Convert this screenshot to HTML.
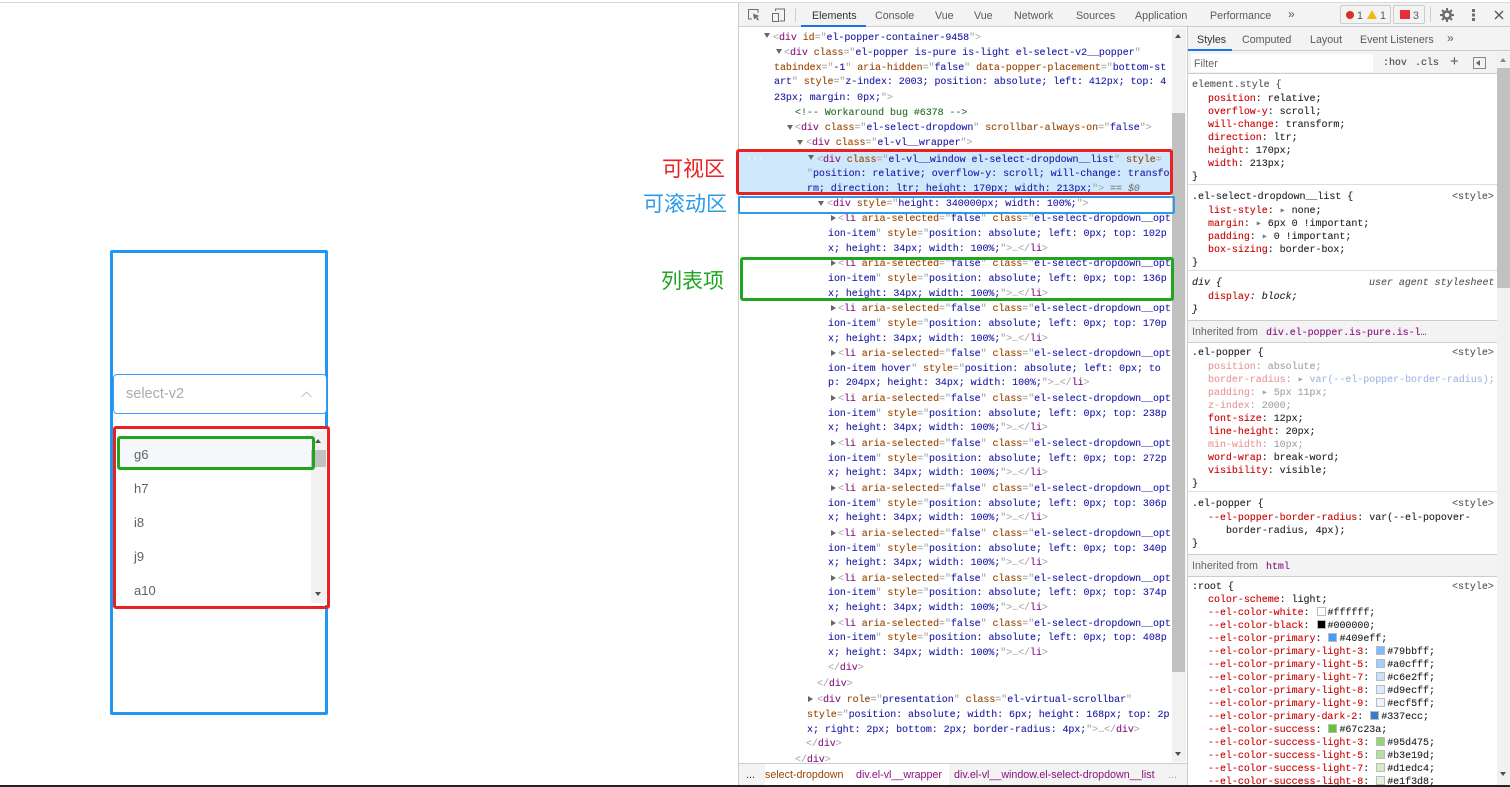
<!DOCTYPE html>
<html><head><meta charset="utf-8"><style>
html,body{margin:0;padding:0;background:#fff;width:1510px;height:787px;overflow:hidden}
#r{position:relative;width:1510px;height:787px;overflow:hidden;font-family:"Liberation Sans",sans-serif}
.a{position:absolute;box-sizing:border-box}
.l{position:absolute;white-space:pre;font:10px/14px "Liberation Mono","DejaVu Sans Mono",monospace;letter-spacing:-.06px;color:#a8a8a8;-webkit-text-stroke:.1px;margin-top:2px}
.l i{font-style:normal;color:#881280}.l b{font-weight:normal;color:#994500}.l u{text-decoration:none;color:#1a1aa6}
.s{color:#222;letter-spacing:-.03px;margin-top:2px}.s em{font-style:normal;color:#c80000}
.f{opacity:.42}
.tri{position:absolute;width:0;height:0;border-left:3.5px solid transparent;border-right:3.5px solid transparent;border-top:5px solid #666}
.trr{position:absolute;width:0;height:0;border-top:3.5px solid transparent;border-bottom:3.5px solid transparent;border-left:5px solid #666}
.tab{position:absolute;font:10.7px/14px "Liberation Sans",sans-serif;color:#5a5a5a;white-space:pre;margin-top:1px}
.opt{position:absolute;left:134px;font-size:13px;line-height:16px;color:#606266}
.cn{position:absolute;font:21px/26px "Noto Sans CJK SC",sans-serif;white-space:pre}
.sw{display:inline-block;width:9px;height:9px;border:1px solid #bbb;box-sizing:border-box;vertical-align:-1px;margin:0 2px 0 1px}
</style></head><body><div id="r">

<div class="a" style="left:0;top:2px;width:1510px;height:1px;background:#d9d9d9"></div>
<div class="a" style="left:0;top:785px;width:1510px;height:2px;background:#222"></div>

<!-- left demo -->
<div class="a" style="left:110px;top:250px;width:218px;height:465px;border:3px solid #2196f3;border-radius:2px"></div>
<div class="a" style="left:113px;top:374px;width:214px;height:40px;border:1px solid #409eff;border-radius:4px;background:#fff"></div>
<div class="a" style="left:126px;top:385px;font-size:14.5px;line-height:18px;color:#a8abb2">select-v2</div>
<svg class="a" style="left:300px;top:390px" width="13" height="9" viewBox="0 0 13 9"><path d="M1.5 7L6.5 2l5 5" fill="none" stroke="#c4c6cb" stroke-width="1"/></svg>

<div class="a" style="left:116px;top:429px;width:211px;height:176px;background:#fff"></div>
<div class="a" style="left:118px;top:438px;width:196px;height:31px;background:#f5f7fa"></div>
<div class="opt" style="top:447px">g6</div>
<div class="opt" style="top:481px">h7</div>
<div class="opt" style="top:515px">i8</div>
<div class="opt" style="top:549px">j9</div>
<div class="opt" style="top:583px">a10</div>
<div class="a" style="left:311px;top:431px;width:15px;height:172px;background:#f1f1f1"></div>
<div class="a" style="left:311px;top:450px;width:15px;height:17px;background:#c1c1c1"></div>
<div class="a" style="left:315px;top:439px;width:0;height:0;border-left:3.5px solid transparent;border-right:3.5px solid transparent;border-bottom:4px solid #505050"></div>
<div class="a" style="left:315px;top:592px;width:0;height:0;border-left:3.5px solid transparent;border-right:3.5px solid transparent;border-top:4px solid #505050"></div>
<div class="a" style="left:113px;top:426px;width:217px;height:183px;border:3px solid #e82222;border-radius:3px"></div>
<div class="a" style="left:117px;top:436px;width:198px;height:34px;border:3px solid #1fa51f;border-radius:3px"></div>

<!-- annotations -->
<div class="cn" style="left:662px;top:155px;color:#e82222">可视区</div>
<div class="cn" style="left:643px;top:190px;color:#2d9be8">可滚动区</div>
<div class="cn" style="left:661px;top:267px;color:#1fa51f">列表项</div>

<!-- devtools frame -->
<div class="a" style="left:738px;top:3px;width:772px;height:782px;background:#fff;border-left:1px solid #ccc"></div>
<div class="a" style="left:739px;top:3px;width:771px;height:24px;background:#f3f3f3;border-bottom:1px solid #ccc"></div>
<svg class="a" style="left:747px;top:8px" width="14" height="14" viewBox="0 0 14 14"><path d="M5 11H1.5V1.5H11V5" fill="none" stroke="#6e6e6e" stroke-width="1"/><path d="M6 5.5l6.5 2.5-2.5 1 2 2.5-1.2 1-2-2.5L7 11.5z" fill="#6e6e6e"/></svg>
<svg class="a" style="left:771px;top:8px" width="15" height="14" viewBox="0 0 15 14"><path d="M4.5 3V1h9v12h-5" fill="none" stroke="#6e6e6e"/><rect x="1.5" y="5.5" width="6" height="8" fill="none" stroke="#6e6e6e"/></svg>
<div class="a" style="left:795px;top:8px;width:1px;height:14px;background:#ccc"></div>
<div class="a" style="left:801px;top:25px;width:65px;height:2px;background:#1a73e8"></div>
<div class="tab" style="left:812px;top:8px;color:#333">Elements</div>
<div class="tab" style="left:875px;top:8px">Console</div>
<div class="tab" style="left:935px;top:8px">Vue</div>
<div class="tab" style="left:974px;top:8px">Vue</div>
<div class="tab" style="left:1014px;top:8px">Network</div>
<div class="tab" style="left:1076px;top:8px">Sources</div>
<div class="tab" style="left:1135px;top:8px">Application</div>
<div class="tab" style="left:1210px;top:8px">Performance</div>
<div class="tab" style="left:1288px;top:6px;font-size:12px">»</div>
<div class="a" style="left:1340px;top:5px;width:51px;height:19px;border:1px solid #ccc;border-radius:2px"></div>
<div class="a" style="left:1393px;top:5px;width:32px;height:19px;border:1px solid #ccc;border-radius:2px"></div>
<div class="a" style="left:1346px;top:11px;width:8px;height:8px;border-radius:50%;background:#d93025"></div>
<div class="tab" style="left:1357px;top:8px">1</div>
<svg class="a" style="left:1367px;top:10px" width="10" height="9" viewBox="0 0 10 9"><path d="M5 0l5 9H0z" fill="#f2b90f"/></svg>
<div class="tab" style="left:1380px;top:8px">1</div>
<div class="a" style="left:1400px;top:10px;width:10px;height:9px;background:#e5303a"></div>
<div class="tab" style="left:1413px;top:8px">3</div>
<div class="a" style="left:1430px;top:7px;width:1px;height:15px;background:#ccc"></div>
<svg class="a" style="left:1440px;top:8px" width="14" height="14" viewBox="0 0 14 14"><circle cx="7" cy="7" r="3.6" fill="none" stroke="#6e6e6e" stroke-width="2.6"/><path d="M7 0v3M7 11v3M0 7h3M11 7h3M2 2l2 2M10 10l2 2M12 2l-2 2M4 10l-2 2" stroke="#6e6e6e" stroke-width="2"/></svg>
<div class="a" style="left:1472px;top:9px;width:3px;height:3px;background:#6e6e6e;box-shadow:0 4.5px 0 #6e6e6e,0 9px 0 #6e6e6e"></div>
<svg class="a" style="left:1494px;top:10px" width="10" height="10" viewBox="0 0 10 10"><path d="M1 1l8 8M9 1L1 9" stroke="#555" stroke-width="1.3"/></svg>

<!-- elements pane -->
<div class="a" style="left:739px;top:151px;width:433px;height:43px;background:#cfe8fc"></div>
<div class="a" style="left:1172px;top:28px;width:14px;height:734px;background:#f1f1f1"></div>
<div class="a" style="left:1172px;top:113px;width:13px;height:559px;background:#c1c1c1"></div>
<div class="a" style="left:1175px;top:34px;border-left:3.5px solid transparent;border-right:3.5px solid transparent;border-bottom:4px solid #505050"></div>
<div class="a" style="left:1175px;top:752px;border-left:3.5px solid transparent;border-right:3.5px solid transparent;border-top:4px solid #505050"></div>
<div class="a" style="left:1187px;top:27px;width:1px;height:758px;background:#ccc"></div>

<div class="tri" style="left:764px;top:33px"></div>
<div class="l" style="left:773px;top:30px">&lt;<i>div</i> <b>id</b>="<u>el-popper-container-9458</u>"&gt;</div>
<div class="tri" style="left:776px;top:49px"></div>
<div class="l" style="left:784px;top:45px">&lt;<i>div</i> <b>class</b>="<u>el-popper is-pure is-light el-select-v2__popper</u>"</div>
<div class="l" style="left:774px;top:60px"><b>tabindex</b>="<u>-1</u>" <b>aria-hidden</b>="<u>false</u>" <b>data-popper-placement</b>="<u>bottom-st</u></div>
<div class="l" style="left:774px;top:74px"><u>art</u>" <b>style</b>="<u>z-index: 2003; position: absolute; left: 412px; top: 4</u></div>
<div class="l" style="left:774px;top:90px"><u>23px; margin: 0px;</u>"&gt;</div>
<div class="l" style="left:795px;top:105px;color:#236e25">&lt;!-- Workaround bug #6378 --&gt;</div>
<div class="tri" style="left:787px;top:125px"></div>
<div class="l" style="left:795px;top:120px">&lt;<i>div</i> <b>class</b>="<u>el-select-dropdown</u>" <b>scrollbar-always-on</b>="<u>false</u>"&gt;</div>
<div class="tri" style="left:797px;top:140px"></div>
<div class="l" style="left:806px;top:135px">&lt;<i>div</i> <b>class</b>="<u>el-vl__wrapper</u>"&gt;</div>
<div class="tri" style="left:808px;top:155px"></div>
<div class="l" style="left:817px;top:152px">&lt;<i>div</i> <b>class</b>="<u>el-vl__window el-select-dropdown__list</u>" <b>style</b>=</div>
<div class="l" style="left:807px;top:166px">"<u>position: relative; overflow-y: scroll; will-change: transfo</u></div>
<div class="l" style="left:807px;top:181px"><u>rm; direction: ltr; height: 170px; width: 213px;</u>"&gt; <span style="color:#777">== <span style="font-style:italic">$0</span></span></div>
<div class="l" style="left:746px;top:149px;color:#fff">...</div>
<div class="tri" style="left:818px;top:201px"></div>
<div class="l" style="left:827px;top:196px">&lt;<i>div</i> <b>style</b>="<u>height: 340000px; width: 100%;</u>"&gt;</div>

<div class="trr" style="left:831px;top:215px"></div>
<div class="l" style="left:838px;top:211px">&lt;<i>li</i> <b>aria-selected</b>="<u>false</u>" <b>class</b>="<u>el-select-dropdown__opt</u></div>
<div class="l" style="left:828px;top:226px"><u>ion-item</u>" <b>style</b>="<u>position: absolute; left: 0px; top: 102p</u></div>
<div class="l" style="left:828px;top:241px"><u>x; height: 34px; width: 100%;</u>"&gt;…&lt;/<i>li</i>&gt;</div>
<div class="trr" style="left:831px;top:260px"></div>
<div class="l" style="left:838px;top:256px">&lt;<i>li</i> <b>aria-selected</b>="<u>false</u>" <b>class</b>="<u>el-select-dropdown__opt</u></div>
<div class="l" style="left:828px;top:271px"><u>ion-item</u>" <b>style</b>="<u>position: absolute; left: 0px; top: 136p</u></div>
<div class="l" style="left:828px;top:286px"><u>x; height: 34px; width: 100%;</u>"&gt;…&lt;/<i>li</i>&gt;</div>
<div class="trr" style="left:831px;top:305px"></div>
<div class="l" style="left:838px;top:301px">&lt;<i>li</i> <b>aria-selected</b>="<u>false</u>" <b>class</b>="<u>el-select-dropdown__opt</u></div>
<div class="l" style="left:828px;top:316px"><u>ion-item</u>" <b>style</b>="<u>position: absolute; left: 0px; top: 170p</u></div>
<div class="l" style="left:828px;top:331px"><u>x; height: 34px; width: 100%;</u>"&gt;…&lt;/<i>li</i>&gt;</div>
<div class="trr" style="left:831px;top:350px"></div>
<div class="l" style="left:838px;top:346px">&lt;<i>li</i> <b>aria-selected</b>="<u>false</u>" <b>class</b>="<u>el-select-dropdown__opt</u></div>
<div class="l" style="left:828px;top:361px"><u>ion-item hover</u>" <b>style</b>="<u>position: absolute; left: 0px; to</u></div>
<div class="l" style="left:828px;top:375px"><u>p: 204px; height: 34px; width: 100%;</u>"&gt;…&lt;/<i>li</i>&gt;</div>
<div class="trr" style="left:831px;top:395px"></div>
<div class="l" style="left:838px;top:391px">&lt;<i>li</i> <b>aria-selected</b>="<u>false</u>" <b>class</b>="<u>el-select-dropdown__opt</u></div>
<div class="l" style="left:828px;top:406px"><u>ion-item</u>" <b>style</b>="<u>position: absolute; left: 0px; top: 238p</u></div>
<div class="l" style="left:828px;top:420px"><u>x; height: 34px; width: 100%;</u>"&gt;…&lt;/<i>li</i>&gt;</div>
<div class="trr" style="left:831px;top:440px"></div>
<div class="l" style="left:838px;top:436px">&lt;<i>li</i> <b>aria-selected</b>="<u>false</u>" <b>class</b>="<u>el-select-dropdown__opt</u></div>
<div class="l" style="left:828px;top:451px"><u>ion-item</u>" <b>style</b>="<u>position: absolute; left: 0px; top: 272p</u></div>
<div class="l" style="left:828px;top:465px"><u>x; height: 34px; width: 100%;</u>"&gt;…&lt;/<i>li</i>&gt;</div>
<div class="trr" style="left:831px;top:485px"></div>
<div class="l" style="left:838px;top:481px">&lt;<i>li</i> <b>aria-selected</b>="<u>false</u>" <b>class</b>="<u>el-select-dropdown__opt</u></div>
<div class="l" style="left:828px;top:496px"><u>ion-item</u>" <b>style</b>="<u>position: absolute; left: 0px; top: 306p</u></div>
<div class="l" style="left:828px;top:510px"><u>x; height: 34px; width: 100%;</u>"&gt;…&lt;/<i>li</i>&gt;</div>
<div class="trr" style="left:831px;top:530px"></div>
<div class="l" style="left:838px;top:526px">&lt;<i>li</i> <b>aria-selected</b>="<u>false</u>" <b>class</b>="<u>el-select-dropdown__opt</u></div>
<div class="l" style="left:828px;top:541px"><u>ion-item</u>" <b>style</b>="<u>position: absolute; left: 0px; top: 340p</u></div>
<div class="l" style="left:828px;top:555px"><u>x; height: 34px; width: 100%;</u>"&gt;…&lt;/<i>li</i>&gt;</div>
<div class="trr" style="left:831px;top:575px"></div>
<div class="l" style="left:838px;top:571px">&lt;<i>li</i> <b>aria-selected</b>="<u>false</u>" <b>class</b>="<u>el-select-dropdown__opt</u></div>
<div class="l" style="left:828px;top:585px"><u>ion-item</u>" <b>style</b>="<u>position: absolute; left: 0px; top: 374p</u></div>
<div class="l" style="left:828px;top:600px"><u>x; height: 34px; width: 100%;</u>"&gt;…&lt;/<i>li</i>&gt;</div>
<div class="trr" style="left:831px;top:620px"></div>
<div class="l" style="left:838px;top:616px">&lt;<i>li</i> <b>aria-selected</b>="<u>false</u>" <b>class</b>="<u>el-select-dropdown__opt</u></div>
<div class="l" style="left:828px;top:630px"><u>ion-item</u>" <b>style</b>="<u>position: absolute; left: 0px; top: 408p</u></div>
<div class="l" style="left:828px;top:645px"><u>x; height: 34px; width: 100%;</u>"&gt;…&lt;/<i>li</i>&gt;</div>
<div class="l" style="left:828px;top:660px">&lt;/<i>div</i>&gt;</div>
<div class="l" style="left:817px;top:676px">&lt;/<i>div</i>&gt;</div>
<div class="trr" style="left:808px;top:696px"></div>
<div class="l" style="left:817px;top:692px">&lt;<i>div</i> <b>role</b>="<u>presentation</u>" <b>class</b>="<u>el-virtual-scrollbar</u>"</div>
<div class="l" style="left:807px;top:707px"><b>style</b>="<u>position: absolute; width: 6px; height: 168px; top: 2p</u></div>
<div class="l" style="left:807px;top:722px"><u>x; right: 2px; bottom: 2px; border-radius: 4px;</u>"&gt;…&lt;/<i>div</i>&gt;</div>
<div class="l" style="left:806px;top:736px">&lt;/<i>div</i>&gt;</div>
<div class="l" style="left:795px;top:752px">&lt;/<i>div</i>&gt;</div>

<!-- breadcrumb -->
<div class="a" style="left:739px;top:763px;width:448px;height:22px;background:#f3f3f3;border-top:1px solid #ccc"></div>
<div class="a" style="left:765px;top:764px;width:184px;height:21px;background:#fff"></div>
<div class="tab" style="left:746px;top:767px;color:#333">...</div>
<div class="tab" style="left:765px;top:767px;color:#994500">select-dropdown</div>
<div class="tab" style="left:856px;top:767px;color:#881280">div.el-vl__wrapper</div>
<div class="tab" style="left:954px;top:767px;color:#881280">div.el-vl__window.el-select-dropdown__list</div>
<div class="tab" style="left:1168px;top:767px;color:#aaa">...</div>

<!-- styles pane -->
<div class="a" style="left:1188px;top:27px;width:322px;height:24px;background:#f3f3f3;border-bottom:1px solid #ccc"></div>
<div class="a" style="left:1188px;top:49px;width:44px;height:2px;background:#1a73e8"></div>
<div class="tab" style="left:1197px;top:32px;color:#333">Styles</div>
<div class="tab" style="left:1242px;top:32px">Computed</div>
<div class="tab" style="left:1310px;top:32px">Layout</div>
<div class="tab" style="left:1360px;top:32px">Event Listeners</div>
<div class="tab" style="left:1447px;top:30px;font-size:12px">»</div>
<div class="a" style="left:1188px;top:51px;width:322px;height:23px;background:#f3f3f3;border-bottom:1px solid #ccc"></div>
<div class="a" style="left:1191px;top:54px;width:182px;height:18px;background:#fff"></div>
<div class="tab" style="left:1194px;top:56px;color:#666">Filter</div>
<div class="l" style="left:1383px;top:55px;color:#444">:hov</div>
<div class="l" style="left:1415px;top:55px;color:#444">.cls</div>
<div class="tab" style="left:1450px;top:54px;font-size:15px;color:#555">+</div>
<div class="a" style="left:1473px;top:57px;width:13px;height:12px;border:1px solid #888"></div>
<div class="a" style="left:1476px;top:60px;border-top:3px solid transparent;border-bottom:3px solid transparent;border-right:4px solid #666"></div>
<div class="a" style="left:1497px;top:52px;width:13px;height:733px;background:#f1f1f1"></div>
<div class="a" style="left:1497px;top:68px;width:13px;height:220px;background:#c1c1c1"></div>
<div class="a" style="left:1500px;top:58px;border-left:3.5px solid transparent;border-right:3.5px solid transparent;border-bottom:4px solid #888"></div>
<div class="a" style="left:1500px;top:772px;border-left:3.5px solid transparent;border-right:3.5px solid transparent;border-top:4px solid #505050"></div>

<div class="l s" style="left:1192px;top:77px;color:#555">element.style {</div>
<div class="l s" style="left:1208px;top:91px"><em>position</em>: relative;</div>
<div class="l s" style="left:1208px;top:104px"><em>overflow-y</em>: scroll;</div>
<div class="l s" style="left:1208px;top:117px"><em>will-change</em>: transform;</div>
<div class="l s" style="left:1208px;top:130px"><em>direction</em>: ltr;</div>
<div class="l s" style="left:1208px;top:143px"><em>height</em>: 170px;</div>
<div class="l s" style="left:1208px;top:156px"><em>width</em>: 213px;</div>
<div class="l s" style="left:1192px;top:169px">}</div>
<div class="a" style="left:1188px;top:184px;width:309px;height:1px;background:#ddd"></div>
<div class="l s" style="left:1192px;top:189px">.el-select-dropdown__list {</div>
<div class="l s" style="left:1452px;top:189px;color:#555">&lt;style&gt;</div>
<div class="l s" style="left:1208px;top:203px"><em>list-style</em>: <span style="color:#777">▸</span> none;</div>
<div class="l s" style="left:1208px;top:216px"><em>margin</em>: <span style="color:#777">▸</span> 6px 0 !important;</div>
<div class="l s" style="left:1208px;top:229px"><em>padding</em>: <span style="color:#777">▸</span> 0 !important;</div>
<div class="l s" style="left:1208px;top:242px"><em>box-sizing</em>: border-box;</div>
<div class="l s" style="left:1192px;top:255px">}</div>
<div class="a" style="left:1188px;top:270px;width:309px;height:1px;background:#ddd"></div>
<div class="l s" style="left:1192px;top:275px;font-style:italic">div {</div>
<div class="l s" style="left:1369px;top:275px;font-style:italic;color:#555">user agent stylesheet</div>
<div class="l s" style="left:1208px;top:289px;font-style:italic"><em>display</em>: block;</div>
<div class="l s" style="left:1192px;top:302px;font-style:italic">}</div>
<div class="a" style="left:1188px;top:320px;width:309px;height:23px;background:#f3f3f3;border-top:1px solid #ccc;border-bottom:1px solid #ccc"></div>
<div class="tab" style="left:1192px;top:324px;color:#666">Inherited from</div>
<div class="l" style="left:1266px;top:325px;color:#881280">div.el-popper.is-pure.is-l…</div>
<div class="l s" style="left:1192px;top:345px">.el-popper {</div>
<div class="l s" style="left:1452px;top:345px;color:#555">&lt;style&gt;</div>
<div class="l s f" style="left:1208px;top:359px"><em>position</em>: absolute;</div>
<div class="l s f" style="left:1208px;top:372px"><em>border-radius</em>: ▸ <span style="color:#1a55c0">var(--el-popper-border-radius);</span></div>
<div class="l s f" style="left:1208px;top:385px"><em>padding</em>: ▸ 5px 11px;</div>
<div class="l s f" style="left:1208px;top:398px"><em>z-index</em>: 2000;</div>
<div class="l s" style="left:1208px;top:411px"><em>font-size</em>: 12px;</div>
<div class="l s" style="left:1208px;top:424px"><em>line-height</em>: 20px;</div>
<div class="l s f" style="left:1208px;top:437px"><em>min-width</em>: 10px;</div>
<div class="l s" style="left:1208px;top:450px"><em>word-wrap</em>: break-word;</div>
<div class="l s" style="left:1208px;top:463px"><em>visibility</em>: visible;</div>
<div class="l s" style="left:1192px;top:476px">}</div>
<div class="a" style="left:1188px;top:491px;width:309px;height:1px;background:#ddd"></div>
<div class="l s" style="left:1192px;top:496px">.el-popper {</div>
<div class="l s" style="left:1452px;top:496px;color:#555">&lt;style&gt;</div>
<div class="l s" style="left:1208px;top:510px"><em>--el-popper-border-radius</em>: var(--el-popover-</div>
<div class="l s" style="left:1226px;top:523px">border-radius, 4px);</div>
<div class="l s" style="left:1192px;top:536px">}</div>
<div class="a" style="left:1188px;top:554px;width:309px;height:23px;background:#f3f3f3;border-top:1px solid #ccc;border-bottom:1px solid #ccc"></div>
<div class="tab" style="left:1192px;top:558px;color:#666">Inherited from</div>
<div class="l" style="left:1266px;top:559px;color:#881280">html</div>
<div class="l s" style="left:1192px;top:579px">:root {</div>
<div class="l s" style="left:1452px;top:579px;color:#555">&lt;style&gt;</div>
<div class="l s" style="left:1208px;top:592px"><em>color-scheme</em>: light;</div>
<div class="l s" style="left:1208px;top:605px"><em>--el-color-white</em>: <span class="sw" style="background:#fff"></span>#ffffff;</div>
<div class="l s" style="left:1208px;top:618px"><em>--el-color-black</em>: <span class="sw" style="background:#000"></span>#000000;</div>
<div class="l s" style="left:1208px;top:631px"><em>--el-color-primary</em>: <span class="sw" style="background:#409eff"></span>#409eff;</div>
<div class="l s" style="left:1208px;top:644px"><em>--el-color-primary-light-3</em>: <span class="sw" style="background:#79bbff"></span>#79bbff;</div>
<div class="l s" style="left:1208px;top:657px"><em>--el-color-primary-light-5</em>: <span class="sw" style="background:#a0cfff"></span>#a0cfff;</div>
<div class="l s" style="left:1208px;top:670px"><em>--el-color-primary-light-7</em>: <span class="sw" style="background:#c6e2ff"></span>#c6e2ff;</div>
<div class="l s" style="left:1208px;top:683px"><em>--el-color-primary-light-8</em>: <span class="sw" style="background:#d9ecff"></span>#d9ecff;</div>
<div class="l s" style="left:1208px;top:696px"><em>--el-color-primary-light-9</em>: <span class="sw" style="background:#ecf5ff"></span>#ecf5ff;</div>
<div class="l s" style="left:1208px;top:709px"><em>--el-color-primary-dark-2</em>: <span class="sw" style="background:#337ecc"></span>#337ecc;</div>
<div class="l s" style="left:1208px;top:722px"><em>--el-color-success</em>: <span class="sw" style="background:#67c23a"></span>#67c23a;</div>
<div class="l s" style="left:1208px;top:735px"><em>--el-color-success-light-3</em>: <span class="sw" style="background:#95d475"></span>#95d475;</div>
<div class="l s" style="left:1208px;top:748px"><em>--el-color-success-light-5</em>: <span class="sw" style="background:#b3e19d"></span>#b3e19d;</div>
<div class="l s" style="left:1208px;top:761px"><em>--el-color-success-light-7</em>: <span class="sw" style="background:#d1edc4"></span>#d1edc4;</div>
<div class="l s" style="left:1208px;top:774px"><em>--el-color-success-light-8</em>: <span class="sw" style="background:#e1f3d8"></span>#e1f3d8;</div>
<div class="a" style="left:1188px;top:785px;width:322px;height:2px;background:#222"></div>

<!-- annotation boxes on devtools -->
<div class="a" style="left:736px;top:149px;width:437px;height:46px;border:3px solid #e82222;border-radius:3px"></div>
<div class="a" style="left:738px;top:196px;width:437px;height:18px;border:2px solid #2d9be8;border-radius:2px"></div>
<div class="a" style="left:740px;top:257px;width:434px;height:44px;border:3px solid #1fa51f;border-radius:3px"></div>
</div></body></html>
